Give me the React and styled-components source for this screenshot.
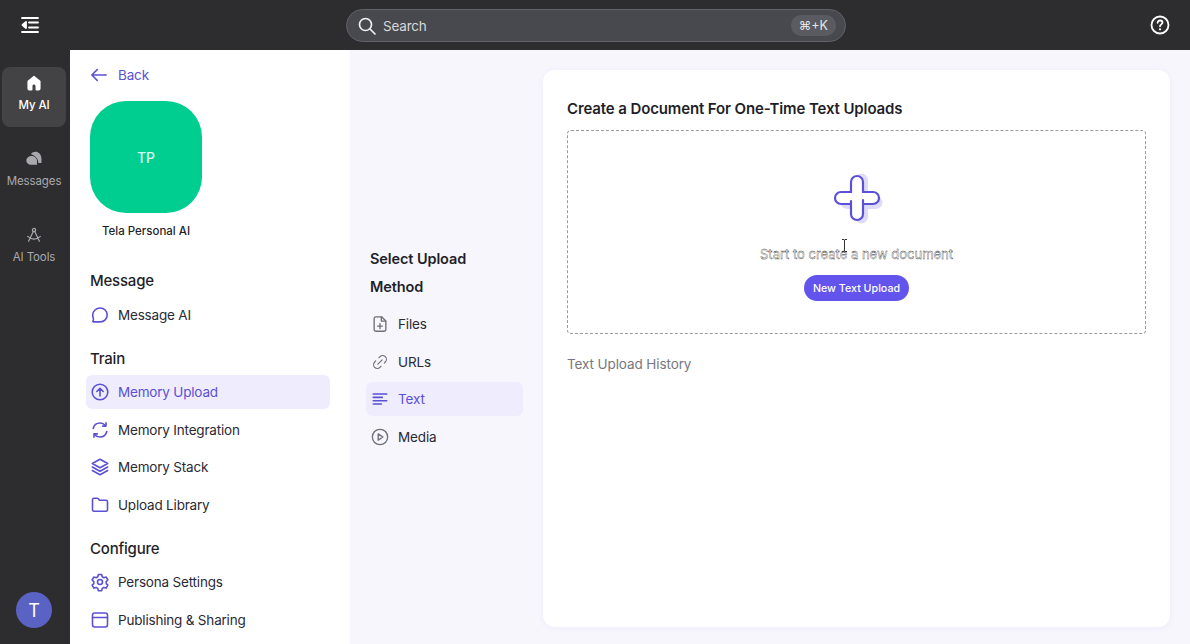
import styled, { createGlobalStyle } from "styled-components";
import { Link2 } from "lucide-react";

const GlobalStyle = createGlobalStyle`
  html, body {
    margin: 0;
    height: 100%;
    overflow: hidden;
    background: #f7f6fd;
  }
  * {
    box-sizing: border-box;
  }
`;

const PURPLE = "#5b50d6";
const GREY = "#6f6f78";

const Icon = ({ size = 20, color = PURPLE, width = 1.6, children }) => (
  <svg
    width={size}
    height={size}
    viewBox="0 0 20 20"
    fill="none"
    stroke={color}
    strokeWidth={width}
    strokeLinecap="round"
    strokeLinejoin="round"
    style={{ flexShrink: 0 }}
  >
    {children}
  </svg>
);

const mainLinks = [
  {
    title: "Message",
    items: [
      {
        label: "Message AI",
        icon: <path d="M10.2 3c4 0 7 3 7 6.900s-3 7-7 7H3.500c-.6 0-.8-.4-.5-.9.6-.8.7-1.700.3-2.800-.4-1-.6-2-.6-3.300C2.700 6 6.200 3 10.200 3z" />,
      },
    ],
  },
  {
    title: "Train",
    items: [
      {
        label: "Memory Upload",
        active: true,
        icon: (
          <>
            <circle cx="10" cy="10" r="7.800" />
            <path d="M10 14V6.500M6.800 9.500 10 6.300l3.200 3.200" />
          </>
        ),
      },
      {
        label: "Memory Integration",
        icon: (
          <>
            <path d="M3.200 8.500C3.900 5.300 6.700 3 10 3c2.200 0 4.100 1 5.400 2.600" />
            <path d="M16.800 11.500C16.100 14.700 13.300 17 10 17c-2.200 0-4.100-1-5.400-2.600" />
            <path d="M16 2.700v3.400h-3.400M4 17.300v-3.400h3.400" />
          </>
        ),
      },
      {
        label: "Memory Stack",
        icon: (
          <>
            <path d="M10 2.300 17.700 6.500 10 10.700 2.300 6.500z" />
            <path d="M2.300 10 10 14.200 17.700 10" />
            <path d="M2.300 13.500 10 17.700l7.700-4.200" />
          </>
        ),
      },
      {
        label: "Upload Library",
        icon: <path d="M2.500 4.800c0-.8.6-1.500 1.500-1.500h3.300c.5 0 .9.2 1.200.6l1 1.400h6.500c.9 0 1.500.7 1.500 1.500v8c0 .9-.6 1.500-1.500 1.500H4c-.9 0-1.500-.6-1.500-1.500z" />,
      },
    ],
  },
  {
    title: "Configure",
    items: [
      {
        label: "Persona Settings",
        icon: (
          <>
            <circle cx="10" cy="10" r="2.500" />
            <path d="M8.300 2.500h3.400l.5 2.300 1.700 1 2.300-.7 1.700 2.900-1.700 1.600v2l1.700 1.600-1.700 2.900-2.300-.7-1.700 1-.5 2.300H8.300l-.5-2.300-1.700-1-2.300.7-1.700-2.900 1.700-1.600v-2L2.100 8l1.700-2.900 2.300.7 1.700-1z" />
          </>
        ),
      },
      {
        label: "Publishing & Sharing",
        icon: (
          <>
            <rect x="2.500" y="3" width="15" height="14" rx="2.200" />
            <path d="M2.500 7.500h15" />
          </>
        ),
      },
    ],
  },
];

const methods = [
  {
    label: "Files",
    icon: (
      <>
        <path d="M3.500 4c0-1.100.8-2 2-2h6.300l4.700 4.700v9.300c0 1.100-.9 2-2 2h-9c-1.200 0-2-.9-2-2z" />
        <path d="M11.500 2.300v4.500h4.800M10 9.500v5.500M7.300 12.300h5.400" />
      </>
    ),
  },
  { label: "URLs", lucide: true },
  {
    label: "Text",
    active: true,
    icon: <path d="M2.500 4.500h15M2.500 8.200h10M2.500 11.900h15M2.500 15.500h9" strokeWidth="1.800" />,
  },
  {
    label: "Media",
    icon: (
      <>
        <circle cx="10" cy="10" r="8.500" />
        <path d="M8 6.500v7l5.200-3.500z" />
      </>
    ),
  },
];

const App = () => {
  return (
    <Page>
      <GlobalStyle />
      <TopBar>
        <MenuButton>
          <Icon size={20} color="#fff" width={1.800}>
            <path d="M2 3h16M9 7.500h9M9 12.500h9M2 17h16" />
            <path d="M6 7 2.500 10 6 13z" fill="#fff" />
          </Icon>
        </MenuButton>
        <SearchBar>
          <Icon size={20} color="#f0f0f2" width={1.700}>
            <circle cx="8.500" cy="8.500" r="6" />
            <path d="m13 13 5 5" />
          </Icon>
          <SearchLabel>Search</SearchLabel>
          <Shortcut>⌘+K</Shortcut>
        </SearchBar>
        <Icon size={20} color="#fff" width={1.800}>
          <circle cx="10" cy="10" r="8.500" />
          <path d="M7.600 7.800c0-1.400 1.100-2.300 2.500-2.300s2.400.9 2.400 2.100c0 1.800-2.500 1.800-2.500 3.700" />
          <path d="M10 14.300h.01" strokeWidth="2.200" />
        </Icon>
      </TopBar>
      <Body>
        <Rail>
          <RailItem $active>
            <Icon size={18} color="#fff">
              <path
                d="M3.500 8.200 10 2.800l6.500 5.400V16c0 .8-.6 1.400-1.400 1.400h-2.600v-4.200c0-1.300-1-2.300-2.500-2.300s-2.500 1-2.500 2.300v4.200H4.900c-.8 0-1.400-.6-1.400-1.400z"
                fill="#fff"
              />
            </Icon>
            My AI
          </RailItem>
          <RailItem>
            <Icon size={18} color="#a9a9ad" width={0}>
              <path d="M6.500 4.500C8.500 2.300 11.500 1.500 14 2.500c2.800 1.100 4.300 4 4.300 7.500v4.500h-3.500c.1-4.500-3.200-8-8.300-10z" fill="#a9a9ad" />
              <path d="M7.500 6.800c3.300 0 5.800 2.500 5.800 5.200v4.500H7c-3 0-5.500-2-5.500-4.800s2.800-4.900 6-4.900z" fill="#a9a9ad" />
            </Icon>
            Messages
          </RailItem>
          <RailItem>
            <Icon size={18} color="#a9a9ad" width={1.300}>
              <circle cx="10" cy="4.500" r="1.800" />
              <path d="M9.200 6 4 17M10.800 6 16 17M3 11.500c2 2 4.500 3 7 3s5-1 7-3" />
            </Icon>
            AI Tools
          </RailItem>
          <RailAvatar>T</RailAvatar>
        </Rail>
        <Sidebar>
          <BackLink>
            <Icon size={18} width={1.700}>
              <path d="M18 10H2.500M8 4 2 10l6 6" />
            </Icon>
            Back
          </BackLink>
          <PersonaTile>TP</PersonaTile>
          <PersonaName>Tela Personal AI</PersonaName>
          {mainLinks.map((group) => (
            <NavGroup key={group.title}>
              <GroupTitle>{group.title}</GroupTitle>
              {group.items.map((item) => (
                <NavRow key={item.label} $active={item.active}>
                  <Icon>{item.icon}</Icon>
                  {item.label}
                </NavRow>
              ))}
            </NavGroup>
          ))}
        </Sidebar>
        <MethodPanel>
          <MethodTitle>Select Upload Method</MethodTitle>
          {methods.map((m) => (
            <MethodRow key={m.label} $active={m.active}>
              {m.lucide ? (
                <Link2 size={18} color={GREY} strokeWidth={1.500} style={{ transform: "rotate(-45deg)" }} />
              ) : (
                <Icon size={18} color={m.active ? PURPLE : GREY} width={1.500}>
                  {m.icon}
                </Icon>
              )}
              {m.label}
            </MethodRow>
          ))}
        </MethodPanel>
        <Content>
          <Card>
            <CardTitle>Create a Document For One-Time Text Uploads</CardTitle>
            <DropZone>
              <svg width="60" height="60" viewBox="0 0 60 60" fill="none">
                <path
                  d="M28 28V12a6.500 6.500 0 0 1 13 0v16h8a6.500 6.500 0 0 1 0 13h-8v8a6.500 6.500 0 0 1-13 0v-8h-8a6.500 6.500 0 0 1 0-13h8z"
                  fill="#dfdcf9"
                />
                <path
                  d="M24 36H14a6 6 0 0 1 0-12H24V14a6 6 0 0 1 12 0V24H46a6 6 0 0 1 0 12H36"
                  stroke={PURPLE}
                  strokeWidth="2.200"
                  fill="#fff"
                />
                <path
                  d="M36 32V46a6 6 0 0 1-12 0V33"
                  stroke={PURPLE}
                  strokeWidth="2.200"
                  fill="#fff"
                  strokeLinecap="round"
                />
              </svg>
              <StartText>
                Start to create a new document
                <TextCursor width="7" height="13" viewBox="0 0 7 13" fill="none" stroke="#333" strokeWidth="1">
                  <path d="M1 .5h2l.5.5.5-.5h2M3.500 1v11M1 12.500h2l.5-.5.5.5h2" />
                </TextCursor>
              </StartText>
              <NewButton>New Text Upload</NewButton>
            </DropZone>
            <HistoryLabel>Text Upload History</HistoryLabel>
          </Card>
        </Content>
      </Body>
    </Page>
  );
};

const Page = styled.div`
  width: 1190px;
  height: 644px;
  display: flex;
  flex-direction: column;
  overflow: hidden;
  font-family: Inter, "Liberation Sans", sans-serif;
  color: #1f1f29;
`;

const TopBar = styled.header`
  height: 50px;
  flex-shrink: 0;
  display: flex;
  align-items: center;
  justify-content: space-between;
  padding: 0 20px;
  background: #2d2d2f;
`;

const MenuButton = styled.div`
  display: flex;
  width: 20px;
  margin-right: 2px;
`;

const SearchBar = styled.div`
  width: 500px;
  height: 33px;
  margin-top: 1px;
  display: flex;
  align-items: center;
  gap: 6px;
  padding: 0 9px 0 10px;
  border: 1px solid #626368;
  border-radius: 17px;
  background: #48494e;
`;

const SearchLabel = styled.span`
  flex: 1;
  font-size: 13.500px;
  letter-spacing: -0.2px;
  color: #d8d8da;
`;

const Shortcut = styled.span`
  padding: 3px 8px;
  border-radius: 10px;
  background: #5a5b61;
  font-size: 12.500px;
  color: #e4e4e6;
`;

const Body = styled.div`
  flex: 1;
  min-height: 0;
  display: flex;
`;

const Rail = styled.nav`
  width: 70px;
  flex-shrink: 0;
  display: flex;
  flex-direction: column;
  align-items: center;
  gap: 16px;
  padding: 17px 2px 16px 0;
  background: #2d2d2f;
`;

const RailItem = styled.div`
  width: 64px;
  height: 60px;
  display: flex;
  flex-direction: column;
  align-items: center;
  justify-content: center;
  gap: 6px;
  padding-bottom: 8px;
  border-radius: 8px;
  font-size: 11.500px;
  letter-spacing: -0.1px;
  font-weight: ${(p) => (p.$active ? 500 : 400)};
  color: ${(p) => (p.$active ? "#fff" : "#a9a9ad")};
  background: ${(p) => (p.$active ? "#434346" : "transparent")};
`;

const RailAvatar = styled.div`
  width: 36px;
  height: 36px;
  margin-top: auto;
  display: flex;
  align-items: center;
  justify-content: center;
  border-radius: 50%;
  background: #5a62c4;
  color: #fff;
  font-size: 18px;
`;

const Sidebar = styled.aside`
  width: 280px;
  flex-shrink: 0;
  padding: 16px 20px 0 16px;
  overflow: hidden;
  background: #fff;
`;

const BackLink = styled.div`
  height: 18px;
  display: flex;
  align-items: center;
  gap: 10px;
  padding-left: 4px;
  font-size: 13.500px;
  letter-spacing: -0.15px;
  color: ${PURPLE};
`;

const PersonaTile = styled.div`
  width: 112px;
  height: 112px;
  margin: 17px 0 0 4px;
  display: flex;
  align-items: center;
  justify-content: center;
  border-radius: 36px;
  background: #00ce90;
  color: #d8fbef;
  font-size: 14px;
  font-weight: 500;
`;

const PersonaName = styled.div`
  width: 112px;
  margin: 11px 0 31px 4px;
  text-align: center;
  font-size: 11.500px;
  font-weight: 500;
  white-space: nowrap;
`;

const NavGroup = styled.section`
  display: flex;
  flex-direction: column;
  gap: 3.500px;
  margin-bottom: 15px;
`;

const GroupTitle = styled.h3`
  margin: 0 0 1px;
  padding-left: 4px;
  font-size: 15px;
  letter-spacing: -0.2px;
  line-height: 24px;
  font-weight: 500;
  color: #1f1f29;
`;

const NavRow = styled.div`
  height: 34px;
  flex-shrink: 0;
  display: flex;
  align-items: center;
  gap: 8px;
  padding-left: 4px;
  border-radius: 6px;
  font-size: 13.500px;
  letter-spacing: -0.19px;
  white-space: nowrap;
  color: ${(p) => (p.$active ? PURPLE : "#2a2a35")};
  background: ${(p) => (p.$active ? "#efedfd" : "transparent")};
`;

const MethodPanel = styled.div`
  width: 193px;
  flex-shrink: 0;
  display: flex;
  flex-direction: column;
  justify-content: center;
  gap: 3.500px;
  padding: 4px 20px 0 16px;
`;

const MethodTitle = styled.h3`
  max-width: 120px;
  margin: 0 0 3px;
  padding-left: 4px;
  font-size: 14.500px;
  letter-spacing: -0.1px;
  line-height: 28px;
  font-weight: 600;
  color: #1f1f29;
`;

const MethodRow = styled.div`
  height: 34px;
  flex-shrink: 0;
  display: flex;
  align-items: center;
  gap: 9px;
  padding-left: 5px;
  border-radius: 6px;
  font-size: 13.500px;
  letter-spacing: -0.15px;
  color: ${(p) => (p.$active ? PURPLE : "#2a2a35")};
  background: ${(p) => (p.$active ? "#efedfd" : "transparent")};
`;

const Content = styled.main`
  flex: 1;
  min-width: 0;
  padding: 20px 20px 17px 0;
`;

const Card = styled.div`
  height: 100%;
  padding: 29px 24px;
  border-radius: 12px;
  background: #fff;
  box-shadow: 0 1px 6px rgba(90, 80, 200, 0.06);
`;

const CardTitle = styled.h2`
  margin: 0 0 11px;
  font-size: 15px;
  letter-spacing: -0.12px;
  line-height: 20px;
  font-weight: 600;
  color: #1f1f29;
`;

const DropZone = styled.div`
  height: 204px;
  display: flex;
  flex-direction: column;
  align-items: center;
  padding-top: 37px;
  border: 1px dashed #9a9aa0;
  border-radius: 4px;
`;

const StartText = styled.p`
  position: relative;
  margin: 17px 0 0;
  font-size: 13px;
  line-height: 18px;
  color: #fff;
  -webkit-text-stroke: 0.3px #222;
`;

const TextCursor = styled.svg`
  position: absolute;
  left: 81px;
  top: -6px;
`;

const NewButton = styled.button`
  height: 26px;
  margin-top: 12px;
  padding: 0 9px;
  border: 0;
  border-radius: 13px;
  background: #6254ec;
  color: #fff;
  font-family: inherit;
  font-size: 10.700px;
  font-weight: 500;
`;

const HistoryLabel = styled.div`
  margin-top: 20px;
  font-size: 13.500px;
  letter-spacing: -0.1px;
  line-height: 20px;
  color: #77777f;
`;

export default App;
